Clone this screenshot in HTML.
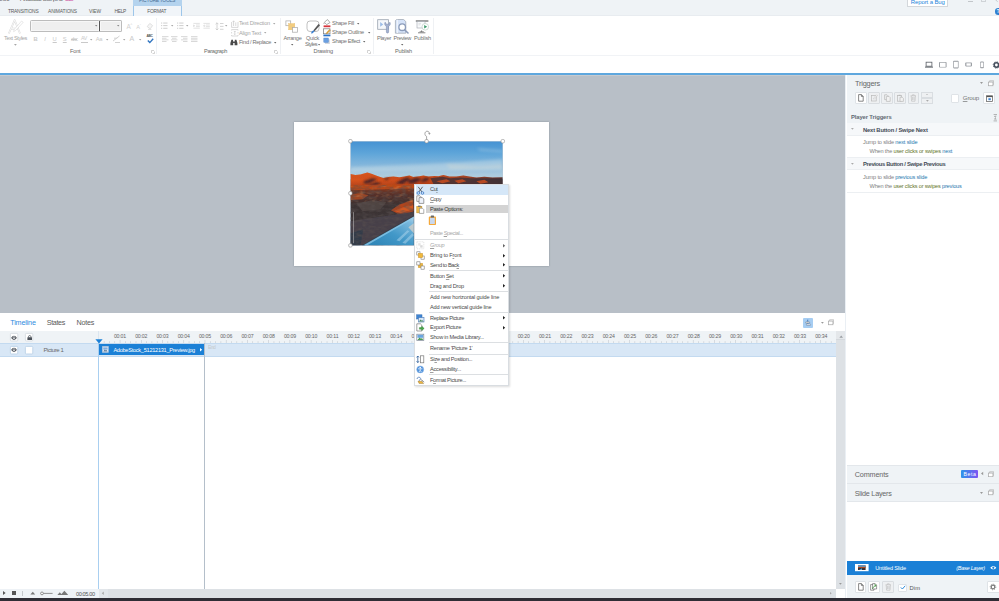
<!DOCTYPE html>
<html><head><meta charset="utf-8"><title>Storyline</title>
<style>
*{box-sizing:border-box;margin:0;padding:0}
html,body{width:999px;height:601px;overflow:hidden;background:#fff}
body{font-family:"Liberation Sans",sans-serif;font-size:5px;color:#444;position:relative}
.a{position:absolute}
.t{position:absolute;white-space:nowrap;line-height:1}
u{text-decoration-thickness:0.5px;text-underline-offset:0.7px;text-decoration-color:rgba(80,80,80,0.55)}
</style></head><body>
<div class="a" style="left:0px;top:0px;width:999px;height:16px;background:#eff3f6;"></div>
<div class="a" style="left:0px;top:15px;width:999px;height:1px;background:#e8ecf0;"></div>
<div class="a" style="left:0px;top:16px;width:999px;height:39px;background:#fff;"></div>
<div class="a" style="left:0px;top:55px;width:999px;height:1.6px;background:#f1f3f6;"></div>
<div class="a" style="left:0px;top:56px;width:999px;height:17px;background:#fff;"></div>
<div class="a" style="left:0px;top:73px;width:999px;height:2px;background:#5ea7de;"></div>
<div class="a" style="left:0px;top:75px;width:846px;height:238px;background:#b8bfc7;"></div>
<div class="a" style="left:0px;top:75px;width:845px;height:1px;background:#c6cacf;"></div>
<div class="a" style="left:0px;top:598px;width:999px;height:3px;background:#2f2d35;"></div>
<div class="a" style="left:0;top:0;width:80px;height:2.4px;overflow:hidden"><div class="t" style="left:-4.00px;top:-4px;font-size:6.6px;color:#787878;letter-spacing:-0.147px;">tled1*</div>
<div class="t" style="left:14.50px;top:-4px;font-size:6.6px;color:#787878;letter-spacing:0.000px;">-</div>
<div class="t" style="left:20.00px;top:-4px;font-size:6.6px;color:#787878;letter-spacing:-0.621px;">Articulate Storyline</div>
<div class="t" style="left:65.00px;top:-4px;font-size:6.6px;color:#d060a8;letter-spacing:-1.004px;">360</div>
</div>
<div class="a" style="left:133px;top:0;width:49px;height:6px;background:#b4d3ee;overflow:hidden"><div class="t" style="left:6.00px;top:-2px;font-size:5.0px;color:#4a7096;letter-spacing:-0.316px;">PICTURE TOOLS</div>
</div>
<div class="a" style="left:133px;top:6px;width:49px;height:10px;background:#f1f5f9;border-left:1px solid #9dc6ea;border-right:1px solid #9dc6ea;"></div>
<div class="t" style="left:8.00px;top:10px;font-size:4.9px;color:#5a5a5a;letter-spacing:-0.222px;">TRANSITIONS</div>
<div class="t" style="left:48.00px;top:10px;font-size:4.9px;color:#5a5a5a;letter-spacing:-0.113px;">ANIMATIONS</div>
<div class="t" style="left:89.00px;top:10px;font-size:4.9px;color:#5a5a5a;letter-spacing:-0.131px;">VIEW</div>
<div class="t" style="left:114.50px;top:10px;font-size:4.9px;color:#5a5a5a;letter-spacing:-0.325px;">HELP</div>
<div class="t" style="left:147.20px;top:10px;font-size:4.9px;color:#5a5a5a;letter-spacing:-0.187px;">FORMAT</div>
<div class="a" style="left:907px;top:-1px;width:41px;height:7.6px;background:#fff;border:1px solid #d3d7db;"></div>
<div class="t" style="left:910.80px;top:-1px;font-size:6.0px;color:#2484da;letter-spacing:-0.113px;">Report a Bug</div>
<div class="a" style="left:968.4px;top:1px;width:4.2px;height:1px;background:#c2c6ca;"></div>
<div class="a" style="left:981.2px;top:-1px;width:4.4px;height:3px;border:1px solid #cfd3d7;border-top:0;"></div>
<svg class="a" style="left:993px;top:0px" width="6" height="3" viewBox="0 0 6 3"><path d="M0.8 -2 L4.6 1.8" stroke="#b8bcc0" stroke-width="0.8" fill="none"/></svg>
<div class="a" style="left:995px;top:8px;width:6.6px;height:6.6px;background:#2e7fd0;border-radius:50%;"></div>
<div class="t" style="left:996.60px;top:9px;font-size:5.2px;color:#fff;letter-spacing:0.000px;font-weight:bold;">?</div>
<svg class="a" style="left:7px;top:19px" width="18" height="17" viewBox="0 0 18 17"><path d="M1.8 14.5 L7.7 1.2 L13 14.5 M4.4 9.6 L11 9.6" stroke="#d6d6d6" stroke-width="1.7" fill="none" stroke-linejoin="round"/><path d="M1.8 14.5 L7.7 1.2 L13 14.5 M4.4 9.6 L11 9.6" stroke="#fff" stroke-width="0.8" fill="none" stroke-linejoin="round"/><path d="M14.6 2 L16.2 3.3 L8.6 11.6 L6.6 12.6 L7.2 10.4 Z" stroke="#d4d4d4" stroke-width="0.55" fill="#fff"/></svg>
<div class="t" style="left:4.00px;top:36px;font-size:5.6px;color:#a6a6a6;letter-spacing:-0.371px;">Text Styles</div>
<svg class="a" style="left:13.10px;top:42.69px" width="4.80" height="3.82"><path d="M1 1 H3.80 L2.40 2.82 Z" fill="#a6a6a6"/></svg>
<div class="a" style="left:30px;top:20px;width:70px;height:12px;background:#efefef;border:1.2px solid #bcbcbc;border-radius:1.5px;box-shadow:inset 0 0 0 0.8px #fafafa;"></div>
<div class="a" style="left:99px;top:20px;width:23px;height:12px;background:#efefef;border:1.2px solid #bcbcbc;border-left:1px solid #555;border-radius:1.5px;box-shadow:inset 0 0 0 0.8px #fafafa;"></div>
<svg class="a" style="left:94.30px;top:24.42px" width="4.40" height="3.56"><path d="M1 1 H3.40 L2.20 2.56 Z" fill="#888"/></svg>
<svg class="a" style="left:116.10px;top:24.42px" width="4.40" height="3.56"><path d="M1 1 H3.40 L2.20 2.56 Z" fill="#888"/></svg>
<div class="t" style="left:126.40px;top:24px;font-size:6.4px;color:#d0d0d0;letter-spacing:0.000px;">A</div>
<div class="t" style="left:130.60px;top:24px;font-size:3.6px;color:#d0d0d0;letter-spacing:0.000px;">^</div>
<div class="t" style="left:136.20px;top:25px;font-size:5.6px;color:#d0d0d0;letter-spacing:0.000px;">A</div>
<div class="t" style="left:139.80px;top:25px;font-size:3.6px;color:#d0d0d0;letter-spacing:0.000px;">ˇ</div>
<svg class="a" style="left:146px;top:22px" width="9" height="9" viewBox="0 0 9 9"><path d="M1.2 4.6 L3.8 1.4 L6.6 3.6 L4.2 6.8 Z M2 7.4 L5.4 7.4" stroke="#d8d8d8" stroke-width="0.8" fill="#f6f6f6"/></svg>
<div class="t" style="left:33.60px;top:37px;font-size:5.8px;color:#c9c9c9;letter-spacing:0.000px;font-weight:bold;">B</div>
<div class="t" style="left:44.20px;top:37px;font-size:5.8px;color:#c9c9c9;letter-spacing:0.000px;font-style:italic;">I</div>
<div class="t" style="left:52.60px;top:37px;font-size:5.8px;color:#c9c9c9;letter-spacing:0.000px;text-decoration:underline;">U</div>
<div class="t" style="left:62.80px;top:37px;font-size:5.8px;color:#c9c9c9;letter-spacing:0.000px;text-decoration:underline;">S</div>
<div class="t" style="left:71.00px;top:37px;font-size:5.4px;color:#c9c9c9;letter-spacing:-0.902px;text-decoration:line-through;">abc</div>
<div class="t" style="left:81.00px;top:36px;font-size:5.2px;color:#c9c9c9;letter-spacing:-0.275px;">AV</div>
<div class="a" style="left:81px;top:42px;width:7px;height:0.8px;background:#c9c9c9;"></div>
<svg class="a" style="left:89.30px;top:37.82px" width="4.40" height="3.56"><path d="M1 1 H3.40 L2.20 2.56 Z" fill="#a6a6a6"/></svg>
<div class="t" style="left:95.80px;top:37px;font-size:5.8px;color:#c9c9c9;letter-spacing:-0.447px;">Aa</div>
<svg class="a" style="left:104.80px;top:37.82px" width="4.40" height="3.56"><path d="M1 1 H3.40 L2.20 2.56 Z" fill="#a6a6a6"/></svg>
<svg class="a" style="left:112px;top:35px" width="9" height="9" viewBox="0 0 9 9"><path d="M1 6 L7.5 1 M2 3.2 L5.2 3.2 M3 7.5 L8 7.5" stroke="#d2d2d2" stroke-width="1" fill="none"/></svg>
<svg class="a" style="left:122.30px;top:37.82px" width="4.40" height="3.56"><path d="M1 1 H3.40 L2.20 2.56 Z" fill="#a6a6a6"/></svg>
<div class="t" style="left:129.60px;top:35px;font-size:7px;color:#c9c9c9;letter-spacing:0.000px;">A</div>
<svg class="a" style="left:138.00px;top:37.82px" width="4.40" height="3.56"><path d="M1 1 H3.40 L2.20 2.56 Z" fill="#a6a6a6"/></svg>
<div class="t" style="left:146.60px;top:35px;font-size:3.3px;color:#555;letter-spacing:-0.383px;font-weight:bold;">ABC</div>
<svg class="a" style="left:146.5px;top:37.5px" width="7" height="6" viewBox="0 0 7 6"><path d="M0.8 2.6 L2.8 4.6 L6.2 0.8" stroke="#2f74c0" stroke-width="1.4" fill="none"/></svg>
<div class="t" style="left:70.00px;top:49px;font-size:5.6px;color:#6a6a6a;letter-spacing:-0.176px;">Font</div>
<svg class="a" style="left:151px;top:49.5px" width="4" height="4" viewBox="0 0 4 4"><path d="M0.5 3 V0.5 H3 M1.5 3.5 H3.5 V1.5" stroke="#b5b5b5" stroke-width="0.6" fill="none"/></svg>
<div class="a" style="left:156px;top:18px;width:1px;height:36px;background:#eff1f4;"></div>
<svg class="a" style="left:161px;top:21.8px" width="7.0" height="8" viewBox="0 0 7.0 8"><rect x="0" y="0.6" width="1.2" height="0.9" fill="#c9c9c9"/><rect x="2.2" y="0.6" width="4.3" height="0.9" fill="#c9c9c9"/><rect x="0" y="3.2" width="1.2" height="0.9" fill="#c9c9c9"/><rect x="2.2" y="3.2" width="4.3" height="0.9" fill="#c9c9c9"/><rect x="0" y="5.8" width="1.2" height="0.9" fill="#c9c9c9"/><rect x="2.2" y="5.8" width="4.3" height="0.9" fill="#c9c9c9"/></svg>
<svg class="a" style="left:169.80px;top:24.22px" width="4.40" height="3.56"><path d="M1 1 H3.40 L2.20 2.56 Z" fill="#a6a6a6"/></svg>
<svg class="a" style="left:176.5px;top:21.8px" width="7.0" height="8" viewBox="0 0 7.0 8"><rect x="0" y="0.6" width="1.2" height="0.9" fill="#c9c9c9"/><rect x="2.2" y="0.6" width="4.3" height="0.9" fill="#c9c9c9"/><rect x="0" y="3.2" width="1.2" height="0.9" fill="#c9c9c9"/><rect x="2.2" y="3.2" width="4.3" height="0.9" fill="#c9c9c9"/><rect x="0" y="5.8" width="1.2" height="0.9" fill="#c9c9c9"/><rect x="2.2" y="5.8" width="4.3" height="0.9" fill="#c9c9c9"/></svg>
<svg class="a" style="left:185.00px;top:24.22px" width="4.40" height="3.56"><path d="M1 1 H3.40 L2.20 2.56 Z" fill="#a6a6a6"/></svg>
<svg class="a" style="left:193px;top:22px" width="8" height="8" viewBox="0 0 8 8"><path d="M0.4 1.4 H6.8 M3 3 H6.8 M3 4.6 H6.8 M0.4 6.2 H6.8 M0.4 3 L1.8 3.8 L0.4 4.6 Z" stroke="#dadada" stroke-width="0.8" fill="none"/></svg>
<svg class="a" style="left:203px;top:22px" width="8" height="8" viewBox="0 0 8 8"><path d="M0.4 1.4 H6.8 M3 3 H6.8 M3 4.6 H6.8 M0.4 6.2 H6.8 M1.8 3 L0.4 3.8 L1.8 4.6 Z" stroke="#dadada" stroke-width="0.8" fill="none"/></svg>
<svg class="a" style="left:214.5px;top:21.5px" width="9" height="9" viewBox="0 0 9 9"><path d="M2 0.8 V8 M0.6 2.2 L2 0.8 L3.4 2.2 M0.6 6.6 L2 8 L3.4 6.6 M5 1.5 H8.5 M5 4.4 H8.5 M5 7.3 H8.5" stroke="#c9c9c9" stroke-width="0.8" fill="none"/></svg>
<svg class="a" style="left:224.00px;top:24.22px" width="4.40" height="3.56"><path d="M1 1 H3.40 L2.20 2.56 Z" fill="#a6a6a6"/></svg>
<svg class="a" style="left:161.5px;top:36.4px" width="7.0" height="8" viewBox="0 0 7.0 8"><rect x="0" y="0.19999999999999996" width="6.5" height="0.9" fill="#d4d4d4"/><rect x="0" y="1.8000000000000003" width="4.5" height="0.9" fill="#d4d4d4"/><rect x="0" y="3.4" width="6.5" height="0.9" fill="#d4d4d4"/><rect x="0" y="5.0" width="4.5" height="0.9" fill="#d4d4d4"/></svg>
<svg class="a" style="left:171px;top:36.4px" width="7.0" height="8" viewBox="0 0 7.0 8"><rect x="0" y="0.19999999999999996" width="6.5" height="0.9" fill="#d4d4d4"/><rect x="1" y="1.8000000000000003" width="4.5" height="0.9" fill="#d4d4d4"/><rect x="0" y="3.4" width="6.5" height="0.9" fill="#d4d4d4"/><rect x="1" y="5.0" width="4.5" height="0.9" fill="#d4d4d4"/></svg>
<svg class="a" style="left:180.6px;top:36.4px" width="7.0" height="8" viewBox="0 0 7.0 8"><rect x="0" y="0.19999999999999996" width="6.5" height="0.9" fill="#d4d4d4"/><rect x="2" y="1.8000000000000003" width="4.5" height="0.9" fill="#d4d4d4"/><rect x="0" y="3.4" width="6.5" height="0.9" fill="#d4d4d4"/><rect x="2" y="5.0" width="4.5" height="0.9" fill="#d4d4d4"/></svg>
<svg class="a" style="left:190.5px;top:36.4px" width="7.0" height="8" viewBox="0 0 7.0 8"><rect x="0" y="0.19999999999999996" width="6.5" height="0.9" fill="#d4d4d4"/><rect x="0" y="1.8000000000000003" width="6.5" height="0.9" fill="#d4d4d4"/><rect x="0" y="3.4" width="6.5" height="0.9" fill="#d4d4d4"/><rect x="0" y="5.0" width="6.5" height="0.9" fill="#d4d4d4"/></svg>
<svg class="a" style="left:230.5px;top:19.5px" width="8" height="8" viewBox="0 0 8 8"><path d="M0.6 2 V7.4 H7 V2 M2.6 6 V1 M4.8 6 V2.4 M1.8 1.8 L2.6 0.8 L3.4 1.8" stroke="#c9c9c9" stroke-width="0.7" fill="none"/></svg>
<div class="t" style="left:239.00px;top:21px;font-size:5.6px;color:#a6a6a6;letter-spacing:-0.209px;">Text Direction</div>
<svg class="a" style="left:271.80px;top:21.52px" width="4.40" height="3.56"><path d="M1 1 H3.40 L2.20 2.56 Z" fill="#a6a6a6"/></svg>
<svg class="a" style="left:230.5px;top:29px" width="8" height="8" viewBox="0 0 8 8"><path d="M0.6 1.5 V0.6 H7 V1.5 M0.6 6 V7 H7 V6 M0.6 3 V4.5 M7 3 V4.5 M3.8 2 V5.6 M3 2.8 L3.8 2 L4.6 2.8 M3 4.8 L3.8 5.6 L4.6 4.8" stroke="#c9c9c9" stroke-width="0.7" fill="none"/></svg>
<div class="t" style="left:239.00px;top:31px;font-size:5.6px;color:#a6a6a6;letter-spacing:-0.218px;">Align Text</div>
<svg class="a" style="left:263.20px;top:31.22px" width="4.40" height="3.56"><path d="M1 1 H3.40 L2.20 2.56 Z" fill="#a6a6a6"/></svg>
<svg class="a" style="left:230.3px;top:38.8px" width="8" height="7" viewBox="0 0 8 7"><path d="M1.4 0.8 H3 V2.4 H4.8 V0.8 H6.4 L7.4 4 V6.2 H4.6 V4 H3.2 V6.2 H0.4 V4 Z" fill="#4a4a4a"/></svg>
<div class="t" style="left:239.00px;top:40px;font-size:5.6px;color:#727272;letter-spacing:-0.293px;">Find / Replace</div>
<svg class="a" style="left:273.20px;top:41.02px" width="4.40" height="3.56"><path d="M1 1 H3.40 L2.20 2.56 Z" fill="#666"/></svg>
<div class="t" style="left:204.00px;top:49px;font-size:5.6px;color:#6a6a6a;letter-spacing:-0.350px;">Paragraph</div>
<svg class="a" style="left:274px;top:49.5px" width="4" height="4" viewBox="0 0 4 4"><path d="M0.5 3 V0.5 H3 M1.5 3.5 H3.5 V1.5" stroke="#b5b5b5" stroke-width="0.6" fill="none"/></svg>
<div class="a" style="left:279.5px;top:18px;width:1px;height:36px;background:#eff1f4;"></div>
<svg class="a" style="left:285px;top:19.5px" width="14" height="13" viewBox="0 0 14 13"><rect x="0.9" y="0.9" width="4.8" height="4.8" fill="#fff" stroke="#a8a8a8" stroke-width="0.7"/><rect x="3.6" y="3.6" width="6.2" height="6.2" fill="#f2cc80" stroke="#eabf6a" stroke-width="0.4"/><rect x="7.6" y="7.4" width="4.8" height="4.8" fill="#fff" stroke="#a8a8a8" stroke-width="0.7"/></svg>
<div class="t" style="left:283.50px;top:36px;font-size:5.6px;color:#727272;letter-spacing:-0.275px;">Arrange</div>
<svg class="a" style="left:290.30px;top:42.82px" width="4.40" height="3.56"><path d="M1 1 H3.40 L2.20 2.56 Z" fill="#666"/></svg>
<svg class="a" style="left:305.5px;top:19.5px" width="15" height="14" viewBox="0 0 15 14"><rect x="1" y="1" width="12" height="10.5" rx="3" fill="#fff" stroke="#a6a6a6" stroke-width="0.7"/><path d="M12.5 4 L14 5.2 L8.6 11.2 L7.4 10.2 Z" fill="#555"/><path d="M7.4 10.2 L8.6 11.2 L6.6 13.2 L5 13.4 L5.6 11.8 Z" fill="#3b7fd0"/></svg>
<div class="t" style="left:306.00px;top:36px;font-size:5.6px;color:#727272;letter-spacing:-0.263px;">Quick</div>
<div class="t" style="left:305.00px;top:42px;font-size:5.6px;color:#727272;letter-spacing:-0.542px;">Styles</div>
<svg class="a" style="left:317.20px;top:43.08px" width="4.20" height="3.43"><path d="M1 1 H3.20 L2.10 2.43 Z" fill="#666"/></svg>
<svg class="a" style="left:323px;top:19.3px" width="8" height="9" viewBox="0 0 8 9"><path d="M2.4 2.2 L4.6 0.6 L7 3.6 L3.6 5.6 L1.6 3.4 Z" fill="#fff" stroke="#777" stroke-width="0.6"/><path d="M1 3.6 C0.4 4.6 0.4 5 1 5 C1.6 5 1.6 4.6 1 3.6" fill="#777"/><rect x="0.6" y="6.4" width="6.8" height="1.8" fill="#d8343c"/></svg>
<div class="t" style="left:332.00px;top:21px;font-size:5.6px;color:#727272;letter-spacing:-0.290px;">Shape Fill</div>
<svg class="a" style="left:356.30px;top:21.92px" width="4.40" height="3.56"><path d="M1 1 H3.40 L2.20 2.56 Z" fill="#666"/></svg>
<svg class="a" style="left:323px;top:28.3px" width="8" height="9" viewBox="0 0 8 9"><rect x="0.6" y="0.8" width="6.4" height="5" fill="#fff" stroke="#777" stroke-width="0.7"/><path d="M6.4 1.4 L7.4 2.2 L4.4 5.4 L3.2 5.8 L3.6 4.6 Z" fill="#e8a838" stroke="#a5751e" stroke-width="0.3"/><rect x="0.4" y="6.6" width="7" height="1.7" fill="#2a72c8"/></svg>
<div class="t" style="left:332.00px;top:30px;font-size:5.6px;color:#727272;letter-spacing:-0.269px;">Shape Outline</div>
<svg class="a" style="left:366.80px;top:31.02px" width="4.40" height="3.56"><path d="M1 1 H3.40 L2.20 2.56 Z" fill="#666"/></svg>
<svg class="a" style="left:323px;top:37.3px" width="8" height="9" viewBox="0 0 8 9"><rect x="2" y="2.4" width="4.8" height="4.6" fill="#d4d8de"/><rect x="0.8" y="1" width="4.6" height="4.4" fill="#6a9fe0" stroke="#4a82cc" stroke-width="0.4"/></svg>
<div class="t" style="left:332.00px;top:39px;font-size:5.6px;color:#727272;letter-spacing:-0.330px;">Shape Effect</div>
<svg class="a" style="left:361.80px;top:40.12px" width="4.40" height="3.56"><path d="M1 1 H3.40 L2.20 2.56 Z" fill="#666"/></svg>
<div class="t" style="left:313.50px;top:49px;font-size:5.6px;color:#6a6a6a;letter-spacing:-0.149px;">Drawing</div>
<svg class="a" style="left:367px;top:49.5px" width="4" height="4" viewBox="0 0 4 4"><path d="M0.5 3 V0.5 H3 M1.5 3.5 H3.5 V1.5" stroke="#b5b5b5" stroke-width="0.6" fill="none"/></svg>
<div class="a" style="left:372.5px;top:18px;width:1px;height:36px;background:#eff1f4;"></div>
<svg class="a" style="left:377px;top:19px" width="15" height="15" viewBox="0 0 15 15"><rect x="0.7" y="0.7" width="10.8" height="9.6" fill="#f4f7fb" stroke="#9aa2ae" stroke-width="0.8"/><path d="M3.2 3 L6.2 5.4 L3.2 7.8 Z" fill="#9cbce6"/><path d="M8.2 3.2 C7.2 4.8 7.8 6.6 9.4 7.2 V13 C9.4 14.4 11.6 14.4 11.6 13 V7.2 C13.2 6.6 13.8 4.8 12.8 3.2 L11.8 5.2 H9.2 Z" fill="#a4b2d0" stroke="#7f8fb4" stroke-width="0.6"/></svg>
<div class="t" style="left:377.00px;top:36px;font-size:5.6px;color:#727272;letter-spacing:-0.312px;">Player</div>
<svg class="a" style="left:394px;top:19px" width="16" height="15" viewBox="0 0 16 15"><path d="M1.4 1.6 L2.6 0.5 H9.6 L11.8 2.6 V14.2 H1.4 Z" fill="#d6e3f8" stroke="#98a0ac" stroke-width="0.7"/><path d="M3.4 0.8 V14" stroke="#eef3fb" stroke-width="1.2"/><circle cx="8.2" cy="8.2" r="3.3" fill="#fff" stroke="#8c9cba" stroke-width="1.3"/><path d="M10.8 11 L14 14" stroke="#8c9cba" stroke-width="1.6" stroke-linecap="round"/></svg>
<div class="t" style="left:393.50px;top:36px;font-size:5.6px;color:#727272;letter-spacing:-0.345px;">Preview</div>
<svg class="a" style="left:400.30px;top:42.82px" width="4.40" height="3.56"><path d="M1 1 H3.40 L2.20 2.56 Z" fill="#666"/></svg>
<svg class="a" style="left:415px;top:19px" width="15" height="15" viewBox="0 0 15 15"><rect x="0.8" y="1.4" width="12.6" height="1.2" fill="#666"/><rect x="2" y="2.6" width="8" height="6.4" fill="#fafbfc" stroke="#a0a6ae" stroke-width="0.6"/><path d="M3.4 4.4 H6 M3.4 5.8 H5.4" stroke="#c4c8ce" stroke-width="0.5"/><circle cx="10.3" cy="7.8" r="3.3" fill="#fff" stroke="#b4c8bc" stroke-width="0.6"/><path d="M9.2 6 L12.2 7.8 L9.2 9.6 Z" fill="#3f9a6c"/><path d="M6.6 11.4 V13 M3 13.8 H10.4 M4.6 12.8 H8.8" stroke="#6a6a6a" stroke-width="0.8" fill="none"/></svg>
<div class="t" style="left:414.00px;top:36px;font-size:5.6px;color:#727272;letter-spacing:-0.195px;">Publish</div>
<div class="t" style="left:395.00px;top:49px;font-size:5.6px;color:#6a6a6a;letter-spacing:-0.195px;">Publish</div>
<div class="a" style="left:432.5px;top:18px;width:1px;height:36px;background:#eff1f4;"></div>
<svg class="a" style="left:924px;top:60px" width="10" height="9" viewBox="0 0 10 9"><rect x="2.1" y="2.2" width="5.8" height="4" fill="#fff" stroke="#5a5f66" stroke-width="0.8"/><path d="M1 7.1 H9" stroke="#5a5f66" stroke-width="1"/></svg>
<svg class="a" style="left:938px;top:60px" width="10" height="9" viewBox="0 0 10 9"><rect x="1" y="2" width="7.6" height="5.6" rx="0.8" fill="#9a9ea3"/><rect x="2" y="2.7" width="5.6" height="4.2" fill="#fff"/></svg>
<svg class="a" style="left:952px;top:60px" width="8" height="10" viewBox="0 0 8 10"><rect x="1.2" y="0.8" width="5.4" height="7.6" rx="0.8" fill="#9a9ea3"/><rect x="1.9" y="1.8" width="4" height="5.6" fill="#fff"/></svg>
<svg class="a" style="left:964px;top:61px" width="10" height="7" viewBox="0 0 10 7"><rect x="1.2" y="1.6" width="6.8" height="3.8" rx="0.8" fill="#9a9ea3"/><rect x="2.4" y="2.3" width="4.4" height="2.4" fill="#fff"/></svg>
<svg class="a" style="left:979px;top:60px" width="6" height="10" viewBox="0 0 6 10"><rect x="1.2" y="1.4" width="3.6" height="6.8" rx="0.8" fill="#9a9ea3"/><rect x="1.8" y="2.5" width="2.4" height="4.6" fill="#fff"/></svg>
<svg class="a" style="left:992px;top:60px" width="8" height="10" viewBox="0 0 8 10"><circle cx="4.4" cy="5" r="2.2" fill="none" stroke="#46505e" stroke-width="1.6"/><circle cx="4.4" cy="5" r="3.2" fill="none" stroke="#46505e" stroke-width="0.9" stroke-dasharray="1.2 1.3"/></svg>
<div class="a" style="left:294px;top:121.8px;width:255px;height:144.4px;background:#fff;box-shadow:0 0 1.6px rgba(60,70,80,0.45);"></div>
<svg class="a" style="left:350px;top:141px" width="154" height="106" viewBox="0 0 154 106">
<defs>
<linearGradient id="sky" x1="0" y1="0" x2="0" y2="1">
<stop offset="0" stop-color="#4592d3"/><stop offset="0.3" stop-color="#5ea5d9"/><stop offset="0.62" stop-color="#86b8dc"/><stop offset="0.82" stop-color="#a9cade"/><stop offset="1" stop-color="#b8d2de"/>
</linearGradient>
<linearGradient id="mtn" x1="0" y1="0" x2="1" y2="0">
<stop offset="0" stop-color="#d8541c"/><stop offset="0.5" stop-color="#c84a1a"/><stop offset="0.75" stop-color="#a04428"/><stop offset="1" stop-color="#5a3430"/>
</linearGradient>
<linearGradient id="gnd" x1="0" y1="0" x2="0" y2="1">
<stop offset="0" stop-color="#b6481c"/><stop offset="0.1" stop-color="#8e3a1c"/><stop offset="0.24" stop-color="#55302a"/><stop offset="0.4" stop-color="#3b3232"/><stop offset="1" stop-color="#3e3a40"/>
</linearGradient>
<linearGradient id="rail" x1="0" y1="1" x2="1" y2="0">
<stop offset="0" stop-color="#2a80b2"/><stop offset="0.5" stop-color="#4298c8"/><stop offset="0.85" stop-color="#7ab8dc"/><stop offset="1" stop-color="#b4d8ec"/>
</linearGradient>
<linearGradient id="mv" x1="0" y1="0" x2="0" y2="1"><stop offset="0" stop-color="#e8641e" stop-opacity="0.35"/><stop offset="0.45" stop-color="#a0361a" stop-opacity="0"/><stop offset="1" stop-color="#6a2416" stop-opacity="0.55"/></linearGradient>
<filter id="bl3" x="-20%" y="-40%" width="140%" height="180%"><feGaussianBlur stdDeviation="0.9"/></filter>
<clipPath id="pc"><rect x="0" y="0" width="152.4" height="104.2"/></clipPath>
<filter id="bl" x="-10%" y="-10%" width="120%" height="120%"><feGaussianBlur stdDeviation="0.6"/></filter>
<filter id="bl2" x="-10%" y="-30%" width="120%" height="160%"><feGaussianBlur stdDeviation="1.6"/></filter>
<filter id="nz" x="0" y="0" width="100%" height="100%"><feTurbulence type="fractalNoise" baseFrequency="0.16 0.34" numOctaves="2" seed="7"/><feColorMatrix type="matrix" values="0 0 0 0 0.1  0 0 0 0 0.08  0 0 0 0 0.08  1.4 1.4 0 0 -1.15"/><feGaussianBlur stdDeviation="0.5"/></filter>
<filter id="nz2" x="0" y="0" width="100%" height="100%"><feTurbulence type="fractalNoise" baseFrequency="0.14 0.3" numOctaves="2" seed="3"/><feColorMatrix type="matrix" values="0 0 0 0 0.8  0 0 0 0 0.34  0 0 0 0 0.12  1.5 1.5 0 0 -1.5"/><feGaussianBlur stdDeviation="0.5"/></filter>
</defs>
<g transform="translate(0.4,0.2)" clip-path="url(#pc)">
<rect x="0" y="0" width="152.4" height="40" fill="url(#sky)"/>
<g filter="url(#bl2)" opacity="0.5">
<path d="M0 26 L70 23 L110 21 L152 18 L152 29 L0 31 Z" fill="#c6dbe6"/>
<path d="M95 22 L130 25 L152 23 L152 27 L100 28 Z" fill="#e6e6dc"/>
<path d="M126 7 L152 9 L152 11 L130 9.6 Z" fill="#a8cce4"/>
</g>
<rect x="0" y="38" width="152.4" height="66.2" fill="url(#gnd)"/>
<g filter="url(#bl)">
<path d="M0 32.8 L5 33.8 L10 33.4 L17 31.4 L21 32.6 L27 34.8 L33 36.8 L38 35.8 L43 35.2 L49 36 L54 35.2 L59 34.4 L63 35.8 L69 35 L73 34.4 L78 35.4 L84 34.8 L88 35 L93 33.8 L99 35.2 L106 35.4 L113 34.4 L119 35.2 L126 36.2 L134 35.6 L142 36.4 L152.4 36 L152.4 46 L0 47 Z" fill="url(#mtn)"/>
<path d="M0 32.8 L5 33.8 L10 33.4 L17 31.4 L21 32.6 L27 34.8 L33 36.8 L38 35.8 L43 35.2 L49 36 L54 35.2 L59 34.4 L63 35.8 L69 35 L73 34.4 L78 35.4 L84 34.8 L88 35 L93 33.8 L99 35.2 L106 35.4 L113 34.4 L119 35.2 L126 36.2 L134 35.6 L142 36.4 L152.4 36 L152.4 46 L0 47 Z" fill="url(#mv)"/>
<path d="M13 40 L22 37 L27 38 L19 42 L14 42.6 Z M16 45 L26 41 L31 42 L24 45.6 Z M33 37.6 L40 36.4 L36 39 Z M45 42 L53 37.6 L57 36 L60 38 L52 43 Z M58 39.4 L66 36.2 L72 38 L64 42 L58 42.4 Z M74 36.6 L80 37 L76 40 L70 41 Z" fill="#40242c" opacity="0.9" filter="url(#bl3)"/>
<path d="M80 37 L92 35.6 L100 37 L110 36.4 L120 37 L134 37 L152.4 37.4 L152.4 44.5 L84 44.5 Z" fill="#37303a" opacity="0.75"/>
<path d="M86 40 L96 38 L100 40 L92 42 Z M104 39.6 L112 38 L116 40 L108 42 Z M126 40 L134 38.6 L138 41 L130 42.6 Z" fill="#c24d22" opacity="0.9"/>
<path d="M0 44 L30 43.4 L62 43 L70 44 L70 47 L0 49 Z" fill="#c04a1a" opacity="0.85"/>
<path d="M0 53 L10 52 L18 54 L12 58 L0 59 Z" fill="#b04a22" opacity="0.8"/>
<path d="M6 62 L22 59 L36 61 L30 68 L12 70 Z" fill="#544a48" opacity="0.75"/>
<path d="M40.6 69 L49 63.4 L62.6 58.6 L63.2 70 L56 73.4 L47 72.4 Z" fill="#b2441e"/>
<path d="M44 69.6 L56 64.8 L62.8 63.8 L62.8 68 L50 72 Z" fill="#d65c26" opacity="0.85"/>
<path d="M0 80 L40 74 L63.4 70.6 L63.4 78 L14 104.2 L0 104.2 Z" fill="#47414a"/>
<path d="M0 92 L13 88 L10 104.2 L0 104.2 Z" fill="#2c3a48" opacity="0.75"/>
</g>
<rect x="0" y="45" width="152.4" height="15" filter="url(#nz2)" opacity="0.55"/>
<rect x="0" y="44" width="152.4" height="60.2" filter="url(#nz)" opacity="0.7"/>
<path d="M12 104.2 L63.4 75.2 L63.4 104.2 Z" fill="url(#rail)"/>
<path d="M12.4 104.2 L63.4 75.4 L63.4 77 L16.4 104.2 Z" fill="#8cc8e8" opacity="0.75"/>
<path d="M11 104.2 L63.4 74.4 L63.4 75.4 L12.6 104.2 Z" fill="#2a3440" opacity="0.55"/>
<path d="M46 99 L57 89 L59 90 L49 100 Z M52 101.6 L62 92 L63.4 94 L55 102.6 Z" fill="#a8d2ea" opacity="0.55" filter="url(#bl)"/>
<path d="M58 86 L63.4 82 L63.4 92 Z" fill="#f0d8c4" opacity="0.6" filter="url(#bl)"/>
<rect x="2.7" y="71" width="0.8" height="31" fill="#d0d0d0" opacity="0.6"/>
</g>
<rect x="0.4" y="0.2" width="152.4" height="104.2" fill="none" stroke="#7f9bb5" stroke-width="0.3"/>
</svg>
<svg class="a" style="left:345px;top:125px" width="165" height="125" viewBox="0 0 165 125"><rect x="3.70" y="14.50" width="3.4" height="3.4" rx="1.2" fill="#fff" stroke="#8c8c8c" stroke-width="0.6"/><rect x="156.10" y="14.50" width="3.4" height="3.4" rx="1.2" fill="#fff" stroke="#8c8c8c" stroke-width="0.6"/><rect x="3.70" y="118.70" width="3.4" height="3.4" rx="1.2" fill="#fff" stroke="#8c8c8c" stroke-width="0.6"/><rect x="3.70" y="66.60" width="3.4" height="3.4" rx="1.2" fill="#fff" stroke="#8c8c8c" stroke-width="0.6"/><rect x="79.90" y="14.50" width="3.4" height="3.4" rx="1.2" fill="#fff" stroke="#8c8c8c" stroke-width="0.6"/><path d="M81.6 14.6 V11.4 C79.2 10.6 79.4 6.4 82 6.2 C83.8 6.2 84.4 7.4 84.4 8.8" stroke="#909090" stroke-width="0.8" fill="none"/><path d="M83.1 8.2 L84.4 9.8 L85.7 8.2 Z" fill="#909090"/></svg>
<div class="a" style="left:845px;top:75px;width:154px;height:523px;background:#fff;"></div>
<div class="a" style="left:845px;top:75px;width:1.4px;height:523px;background:#eaeff4;"></div>
<div class="a" style="left:847px;top:75px;width:152px;height:48px;background:#f7f9fb;"></div>
<div class="a" style="left:847px;top:75px;width:152px;height:34.7px;background:#eff3f6;"></div>
<div class="t" style="left:855.00px;top:80px;font-size:7.4px;color:#666;letter-spacing:-0.233px;">Triggers</div>
<svg class="a" style="left:979.30px;top:81.43px" width="5.00" height="3.95"><path d="M1 1 H4.00 L2.50 2.95 Z" fill="#999"/></svg>
<svg class="a" style="left:987.9px;top:80.3px" width="6.4" height="6.4" viewBox="0 0 8 8"><rect x="0.8" y="2.6" width="5.4" height="4.6" fill="#fff" stroke="#a8a8a8" stroke-width="0.9"/><path d="M2 2.4 V1 H7.2 V5.4 H6.2" stroke="#b0b0b0" stroke-width="0.9" fill="none"/></svg>
<div class="a" style="left:855.4px;top:92.3px;width:11.6px;height:11.8px;background:#fff;border:1px solid #dfe3e7;border-radius:1px;"></div>
<svg class="a" style="left:858.3px;top:94.2px" width="6" height="8" viewBox="0 0 6 8"><path d="M0.6 0.6 H3.4 L5.2 2.4 V7.2 H0.6 Z M3.4 0.6 V2.4 H5.2" fill="#fff" stroke="#555" stroke-width="0.7"/></svg>
<div class="a" style="left:868.4px;top:92.3px;width:11.8px;height:11.8px;background:#eef0f2;border:1px solid #d9dde1;border-radius:1px;"></div>
<div class="a" style="left:881.4px;top:92.3px;width:11.8px;height:11.8px;background:#eef0f2;border:1px solid #d9dde1;border-radius:1px;"></div>
<div class="a" style="left:894.4px;top:92.3px;width:11.8px;height:11.8px;background:#eef0f2;border:1px solid #d9dde1;border-radius:1px;"></div>
<div class="a" style="left:907.6px;top:92.3px;width:11.8px;height:11.8px;background:#eef0f2;border:1px solid #d9dde1;border-radius:1px;"></div>
<svg class="a" style="left:871.2px;top:94.4px" width="7" height="8" viewBox="0 0 7 8"><rect x="0.6" y="1.4" width="4.6" height="5.6" fill="none" stroke="#b9b9b9" stroke-width="0.7"/><path d="M2.4 4.6 L5.6 0.8 L6.4 1.6 L3.2 5.2 Z" fill="#fff" stroke="#b9b9b9" stroke-width="0.5"/></svg>
<svg class="a" style="left:884.2px;top:94.4px" width="7" height="8" viewBox="0 0 7 8"><path d="M0.6 0.8 H3 L4 1.8 V5.6 H0.6 Z" fill="none" stroke="#b9b9b9" stroke-width="0.7"/><path d="M2.4 2.4 H5 L6.2 3.6 V7.4 H2.4 Z" fill="#f2f2f2" stroke="#b9b9b9" stroke-width="0.7"/></svg>
<svg class="a" style="left:897.2px;top:94.4px" width="7" height="8" viewBox="0 0 7 8"><rect x="0.6" y="1.6" width="4" height="5.6" fill="none" stroke="#b9b9b9" stroke-width="0.7"/><rect x="1.6" y="0.8" width="2" height="1.2" fill="#b9b9b9"/><path d="M3 3.2 H5.2 L6.4 4.4 V7.4 H3 Z" fill="#f2f2f2" stroke="#b9b9b9" stroke-width="0.7"/></svg>
<svg class="a" style="left:910.4px;top:94.4px" width="7" height="8" viewBox="0 0 7 8"><path d="M0.6 1.8 H6 M2.4 1.8 V0.8 H4.2 V1.8 M1.2 1.8 L1.6 7.2 H5 L5.4 1.8 M2.6 3 V6 M4 3 V6" fill="none" stroke="#b9b9b9" stroke-width="0.6"/></svg>
<div class="a" style="left:921.4px;top:92.3px;width:12px;height:6px;background:#eef0f2;border:1px solid #d9dde1;"></div>
<div class="a" style="left:921.4px;top:98.2px;width:12px;height:6px;background:#eef0f2;border:1px solid #d9dde1;"></div>
<div class="a" style="left:926px;top:94.4px;width:0;height:0;border-left:1.4px solid transparent;border-right:1.4px solid transparent;border-bottom:1.8px solid #aaa"></div>
<svg class="a" style="left:925.00px;top:99.49px" width="4.80" height="3.82"><path d="M1 1 H3.80 L2.40 2.82 Z" fill="#aaa"/></svg>
<div class="a" style="left:951.2px;top:94.4px;width:8px;height:8.2px;background:#fff;border:1px solid #dfe3e7;border-radius:1px;"></div>
<div class="t" style="left:962.80px;top:95px;font-size:6.2px;color:#777;letter-spacing:-0.206px;"><u>G</u>roup</div>
<div class="a" style="left:983.2px;top:92.3px;width:12px;height:11.8px;background:#fff;border:1px solid #dfe3e7;border-radius:1px;"></div>
<svg class="a" style="left:985.6px;top:94.6px" width="8" height="8" viewBox="0 0 8 8"><rect x="0.6" y="0.8" width="6" height="5.6" fill="#fff" stroke="#555" stroke-width="0.7"/><rect x="0.6" y="0.8" width="6" height="1.3" fill="#555"/><rect x="2.4" y="3.2" width="2.4" height="2" fill="#3f86d4"/></svg>
<div class="a" style="left:847px;top:110.3px;width:152px;height:12.5px;background:#eff3f6;"></div>
<div class="t" style="left:851.00px;top:115px;font-size:5.9px;color:#626a74;letter-spacing:-0.136px;font-weight:bold;">Player Triggers</div>
<svg class="a" style="left:993px;top:113.6px" width="5" height="8" viewBox="0 0 5 8"><path d="M0.6 0.5 H4 M0.6 6.9 H4 M2.3 1.6 V3 M2.3 4.4 V5.8 M1.2 2.2 L2.3 3.2 L3.4 2.2 M1.2 5.2 L2.3 4.2 L3.4 5.2" stroke="#888" stroke-width="0.6" fill="none"/></svg>
<div class="a" style="left:847px;top:123.2px;width:152px;height:12.2px;background:#f6f8fa;"></div>
<div class="a" style="left:847px;top:135.4px;width:152px;height:0.8px;background:#eceff2;"></div>
<svg class="a" style="left:850.20px;top:127.39px" width="4.80" height="3.82"><path d="M1 1 H3.80 L2.40 2.82 Z" fill="#aaa"/></svg>
<div class="t" style="left:863.00px;top:128px;font-size:5.8px;color:#444c56;letter-spacing:-0.164px;font-weight:bold;">Next Button / Swipe Next</div>
<div class="t" style="left:863.00px;top:140px;font-size:5.6px;color:#808080;letter-spacing:-0.159px;">Jump to slide <span style="color:#2878b0">next slide</span></div>
<div class="t" style="left:869.60px;top:149px;font-size:5.6px;color:#808080;letter-spacing:-0.183px;">When the <span style="color:#66762e">user clicks or swipes</span> <span style="color:#2878b0">next</span></div>
<div class="a" style="left:847px;top:156.8px;width:152px;height:0.8px;background:#eceff2;"></div>
<div class="a" style="left:847px;top:157.6px;width:152px;height:11.8px;background:#f6f8fa;"></div>
<div class="a" style="left:847px;top:169.4px;width:152px;height:0.8px;background:#eceff2;"></div>
<svg class="a" style="left:850.20px;top:161.69px" width="4.80" height="3.82"><path d="M1 1 H3.80 L2.40 2.82 Z" fill="#aaa"/></svg>
<div class="t" style="left:863.00px;top:162px;font-size:5.8px;color:#444c56;letter-spacing:-0.316px;font-weight:bold;">Previous Button / Swipe Previous</div>
<div class="t" style="left:863.00px;top:175px;font-size:5.6px;color:#808080;letter-spacing:-0.164px;">Jump to slide <span style="color:#2878b0">previous slide</span></div>
<div class="t" style="left:869.60px;top:184px;font-size:5.6px;color:#808080;letter-spacing:-0.192px;">When the <span style="color:#66762e">user clicks or swipes</span> <span style="color:#2878b0">previous</span></div>
<div class="a" style="left:847px;top:191.6px;width:152px;height:0.8px;background:#eceff2;"></div>
<div class="a" style="left:847px;top:465px;width:152px;height:37px;background:#e3e7eb;"></div>
<div class="a" style="left:847px;top:465.6px;width:152px;height:17.4px;background:#eff3f6;"></div>
<div class="t" style="left:854.80px;top:471px;font-size:7.2px;color:#666;letter-spacing:-0.126px;">Comments</div>
<div class="a" style="left:961.4px;top:470px;width:17px;height:8px;background:linear-gradient(90deg,#2f95ea,#7d55f2);border-radius:1px;"></div>
<div class="t" style="left:963.40px;top:472px;font-size:5.2px;color:#fff;letter-spacing:0.576px;">Beta</div>
<svg class="a" style="left:979.6px;top:471.4px" width="5" height="5"><path d="M3.2 0.8 V4.2 L1 2.5 Z" fill="#999"/></svg>
<svg class="a" style="left:987.9px;top:470.8px" width="6.4" height="6.4" viewBox="0 0 8 8"><rect x="0.8" y="2.6" width="5.4" height="4.6" fill="#fff" stroke="#a8a8a8" stroke-width="0.9"/><path d="M2 2.4 V1 H7.2 V5.4 H6.2" stroke="#b0b0b0" stroke-width="0.9" fill="none"/></svg>
<div class="a" style="left:847px;top:483.8px;width:152px;height:17.6px;background:#eff3f6;"></div>
<div class="t" style="left:854.80px;top:490px;font-size:7.2px;color:#666;letter-spacing:-0.235px;">Slide Layers</div>
<svg class="a" style="left:979.30px;top:490.82px" width="5.00" height="3.95"><path d="M1 1 H4.00 L2.50 2.95 Z" fill="#999"/></svg>
<svg class="a" style="left:987.9px;top:489.4px" width="6.4" height="6.4" viewBox="0 0 8 8"><rect x="0.8" y="2.6" width="5.4" height="4.6" fill="#fff" stroke="#a8a8a8" stroke-width="0.9"/><path d="M2 2.4 V1 H7.2 V5.4 H6.2" stroke="#b0b0b0" stroke-width="0.9" fill="none"/></svg>
<div class="a" style="left:847.3px;top:561.2px;width:151.7px;height:13.6px;background:#1b80d6;"></div>
<svg class="a" style="left:855px;top:564px" width="14" height="8" viewBox="0 0 14 8"><rect x="0" y="0" width="13.6" height="7.2" fill="#fff"/><rect x="3" y="1.4" width="7.6" height="4.6" fill="#3a3034"/><rect x="3" y="1.4" width="7.6" height="1.6" fill="#5c9ed6"/><rect x="3" y="2.8" width="7.6" height="1" fill="#c8541e"/><path d="M4 6 L7 4.2 V6 Z" fill="#58a8dc"/></svg>
<div class="t" style="left:875.20px;top:566px;font-size:5.6px;color:#fff;letter-spacing:-0.157px;">Untitled Slide</div>
<div class="t" style="left:956.20px;top:566px;font-size:5.6px;color:#fff;letter-spacing:-0.272px;font-style:italic;">(Base Layer)</div>
<svg class="a" style="left:989.6px;top:565.4px" width="7" height="6" viewBox="0 0 7 6"><path d="M0.4 2.8 C1.6 0.8 5 0.8 6.2 2.8 C5 4.8 1.6 4.8 0.4 2.8 Z" fill="#fff"/><circle cx="3.3" cy="2.8" r="1.1" fill="#1b80d6"/></svg>
<div class="a" style="left:847px;top:574.8px;width:152px;height:23.2px;background:#eff3f6;"></div>
<div class="a" style="left:855.4px;top:581.2px;width:11px;height:11.8px;background:#fff;border:1px solid #dfe3e7;border-radius:1px;"></div>
<div class="a" style="left:868px;top:581.2px;width:11.6px;height:11.8px;background:#fff;border:1px solid #dfe3e7;border-radius:1px;"></div>
<div class="a" style="left:882px;top:581.2px;width:11.6px;height:11.8px;background:#eef0f2;border:1px solid #d9dde1;border-radius:1px;"></div>
<svg class="a" style="left:858px;top:583.2px" width="6" height="8" viewBox="0 0 6 8"><path d="M0.6 0.6 H3.4 L5.2 2.4 V7.2 H0.6 Z M3.4 0.6 V2.4 H5.2" fill="#fff" stroke="#555" stroke-width="0.7"/></svg>
<svg class="a" style="left:870.4px;top:583.2px" width="8" height="8" viewBox="0 0 8 8"><path d="M0.6 1.6 H3 L4 2.6 V7.2 H0.6 Z" fill="#fff" stroke="#555" stroke-width="0.6"/><path d="M2.6 0.6 H5.2 L6.6 2 V6 H2.6 Z" fill="#fff" stroke="#555" stroke-width="0.6"/><path d="M2 5.6 L5.8 2 L4.4 1.8 M5.8 2 L5.6 3.6" stroke="#4a9a4a" stroke-width="0.9" fill="none"/></svg>
<svg class="a" style="left:884.6px;top:583.2px" width="7" height="8" viewBox="0 0 7 8"><path d="M0.6 1.8 H6 M2.4 1.8 V0.8 H4.2 V1.8 M1.2 1.8 L1.6 7.2 H5 L5.4 1.8 M2.6 3 V6 M4 3 V6" fill="none" stroke="#b9b9b9" stroke-width="0.6"/></svg>
<div class="a" style="left:898.2px;top:583.6px;width:8.4px;height:8.4px;background:#fff;border:1px solid #dfe3e7;border-radius:1px;"></div>
<svg class="a" style="left:899.6px;top:585.2px" width="6" height="5" viewBox="0 0 6 5"><path d="M0.8 2.4 L2.4 4 L5.2 0.8" stroke="#1b80d6" stroke-width="0.9" fill="none"/></svg>
<div class="t" style="left:909.60px;top:586px;font-size:5.8px;color:#555;letter-spacing:0.030px;">Dim</div>
<div class="a" style="left:986.8px;top:581.2px;width:13px;height:11.8px;background:#fff;border:1px solid #dfe3e7;border-radius:1px;"></div>
<svg class="a" style="left:989px;top:583.2px" width="8" height="8" viewBox="0 0 8 8"><circle cx="4" cy="4" r="1.8" fill="none" stroke="#7a7a7a" stroke-width="1.2"/><circle cx="4" cy="4" r="2.8" fill="none" stroke="#7a7a7a" stroke-width="0.8" stroke-dasharray="1.1 1.1"/></svg>
<div class="a" style="left:0px;top:313px;width:845px;height:284px;background:#fff;"></div>
<div class="t" style="left:10.20px;top:319px;font-size:7.2px;color:#2e8ae0;letter-spacing:-0.168px;">Timeline</div>
<div class="t" style="left:46.80px;top:319px;font-size:7.2px;color:#5a5a5a;letter-spacing:-0.369px;">States</div>
<div class="t" style="left:76.60px;top:319px;font-size:7.2px;color:#5a5a5a;letter-spacing:-0.242px;">Notes</div>
<div class="a" style="left:803px;top:317.6px;width:10px;height:10px;background:#a6cdf2;border-radius:1px;"></div>
<svg class="a" style="left:804.4px;top:318.6px" width="8" height="8" viewBox="0 0 8 8"><path d="M3.7 1 V5.6" stroke="#4a6a94" stroke-width="0.6"/><path d="M3 0.8 H4.4 L3.7 1.8 Z" fill="#2f6fc0"/><rect x="1.6" y="2.8" width="4" height="1.5" rx="0.5" fill="#e8e0d4" stroke="#5a7aa0" stroke-width="0.5"/><rect x="2.4" y="5" width="4.2" height="1.5" rx="0.5" fill="#f4f4f4" stroke="#5a7aa0" stroke-width="0.5"/></svg>
<svg class="a" style="left:820.00px;top:320.69px" width="4.80" height="3.82"><path d="M1 1 H3.80 L2.40 2.82 Z" fill="#999"/></svg>
<svg class="a" style="left:828.0px;top:319.4px" width="6.4" height="6.4" viewBox="0 0 8 8"><rect x="0.8" y="2.6" width="5.4" height="4.6" fill="#fff" stroke="#a8a8a8" stroke-width="0.9"/><path d="M2 2.4 V1 H7.2 V5.4 H6.2" stroke="#b0b0b0" stroke-width="0.9" fill="none"/></svg>
<div class="a" style="left:0px;top:331px;width:836px;height:12.2px;background:#eff3f6;"></div>
<div class="a" style="left:0px;top:343.2px;width:836px;height:13.6px;background:#d8e7f6;border-top:1px solid #c3daf0;border-bottom:1px solid #c3daf0;"></div>
<svg class="a" style="left:9.2px;top:332.3px" width="10.4" height="10.6" viewBox="0 0 10.4 10.6"><rect x="1.4" y="1.4" width="7.4" height="7.6" rx="0.9" fill="#fff" stroke="#d6dbe1" stroke-width="0.9"/></svg>
<svg class="a" style="left:11.4px;top:335px" width="6" height="5.4" viewBox="0 0 6 5.4"><path d="M0.2 2.7 C1.6 0 4.4 0 5.8 2.7 C4.4 5.4 1.6 5.4 0.2 2.7 Z" fill="#4a5058"/><circle cx="3" cy="2.7" r="1.3" fill="#fff"/><circle cx="3" cy="2.7" r="0.75" fill="#4a5058"/></svg>
<svg class="a" style="left:24.4px;top:332.3px" width="10.4" height="10.6" viewBox="0 0 10.4 10.6"><rect x="1.4" y="1.4" width="7.4" height="7.6" rx="0.9" fill="#fff" stroke="#d6dbe1" stroke-width="0.9"/></svg>
<svg class="a" style="left:27px;top:334.8px" width="5.6" height="5.4" viewBox="0 0 5.6 5.4"><rect x="0.4" y="2.2" width="4.6" height="2.9" rx="0.3" fill="#4a5058"/><path d="M1.5 2.4 V1.5 C1.5 0.3 3.9 0.3 3.9 1.5 V2.4" stroke="#4a5058" stroke-width="0.8" fill="none"/></svg>
<svg class="a" style="left:9.2px;top:344.6px" width="10.4" height="10.6" viewBox="0 0 10.4 10.6"><rect x="1.4" y="1.4" width="7.4" height="7.6" rx="0.9" fill="#fff" stroke="#bcd2e8" stroke-width="0.9"/></svg>
<svg class="a" style="left:11.4px;top:347.2px" width="6" height="5.4" viewBox="0 0 6 5.4"><path d="M0.2 2.7 C1.6 0 4.4 0 5.8 2.7 C4.4 5.4 1.6 5.4 0.2 2.7 Z" fill="#4a5058"/><circle cx="3" cy="2.7" r="1.3" fill="#fff"/><circle cx="3" cy="2.7" r="0.75" fill="#4a5058"/></svg>
<svg class="a" style="left:24.4px;top:344.6px" width="10.4" height="10.6" viewBox="0 0 10.4 10.6"><rect x="1.4" y="1.4" width="7.4" height="7.6" rx="0.9" fill="#fff" stroke="#bcd2e8" stroke-width="0.9"/></svg>
<div class="t" style="left:43.40px;top:347px;font-size:6.0px;color:#6a6a6a;letter-spacing:-0.409px;">Picture 1</div>
<svg class="a" style="left:0px;top:331px" width="836" height="12.2" viewBox="0 0 836 12.2"><rect x="98.20" y="9.0" width="0.6" height="3.0" fill="#c3c9d0"/><rect x="103.51" y="10.2" width="0.6" height="1.8" fill="#c3c9d0"/><rect x="108.83" y="10.2" width="0.6" height="1.8" fill="#c3c9d0"/><rect x="114.14" y="10.2" width="0.6" height="1.8" fill="#c3c9d0"/><rect x="119.45" y="9.0" width="0.6" height="3.0" fill="#c3c9d0"/><rect x="124.76" y="10.2" width="0.6" height="1.8" fill="#c3c9d0"/><rect x="130.07" y="10.2" width="0.6" height="1.8" fill="#c3c9d0"/><rect x="135.39" y="10.2" width="0.6" height="1.8" fill="#c3c9d0"/><rect x="140.70" y="9.0" width="0.6" height="3.0" fill="#c3c9d0"/><rect x="146.01" y="10.2" width="0.6" height="1.8" fill="#c3c9d0"/><rect x="151.32" y="10.2" width="0.6" height="1.8" fill="#c3c9d0"/><rect x="156.64" y="10.2" width="0.6" height="1.8" fill="#c3c9d0"/><rect x="161.95" y="9.0" width="0.6" height="3.0" fill="#c3c9d0"/><rect x="167.26" y="10.2" width="0.6" height="1.8" fill="#c3c9d0"/><rect x="172.57" y="10.2" width="0.6" height="1.8" fill="#c3c9d0"/><rect x="177.89" y="10.2" width="0.6" height="1.8" fill="#c3c9d0"/><rect x="183.20" y="9.0" width="0.6" height="3.0" fill="#c3c9d0"/><rect x="188.51" y="10.2" width="0.6" height="1.8" fill="#c3c9d0"/><rect x="193.82" y="10.2" width="0.6" height="1.8" fill="#c3c9d0"/><rect x="199.14" y="10.2" width="0.6" height="1.8" fill="#c3c9d0"/><rect x="204.45" y="9.0" width="0.6" height="3.0" fill="#c3c9d0"/><rect x="209.76" y="10.2" width="0.6" height="1.8" fill="#c3c9d0"/><rect x="215.07" y="10.2" width="0.6" height="1.8" fill="#c3c9d0"/><rect x="220.39" y="10.2" width="0.6" height="1.8" fill="#c3c9d0"/><rect x="225.70" y="9.0" width="0.6" height="3.0" fill="#c3c9d0"/><rect x="231.01" y="10.2" width="0.6" height="1.8" fill="#c3c9d0"/><rect x="236.32" y="10.2" width="0.6" height="1.8" fill="#c3c9d0"/><rect x="241.64" y="10.2" width="0.6" height="1.8" fill="#c3c9d0"/><rect x="246.95" y="9.0" width="0.6" height="3.0" fill="#c3c9d0"/><rect x="252.26" y="10.2" width="0.6" height="1.8" fill="#c3c9d0"/><rect x="257.57" y="10.2" width="0.6" height="1.8" fill="#c3c9d0"/><rect x="262.89" y="10.2" width="0.6" height="1.8" fill="#c3c9d0"/><rect x="268.20" y="9.0" width="0.6" height="3.0" fill="#c3c9d0"/><rect x="273.51" y="10.2" width="0.6" height="1.8" fill="#c3c9d0"/><rect x="278.82" y="10.2" width="0.6" height="1.8" fill="#c3c9d0"/><rect x="284.14" y="10.2" width="0.6" height="1.8" fill="#c3c9d0"/><rect x="289.45" y="9.0" width="0.6" height="3.0" fill="#c3c9d0"/><rect x="294.76" y="10.2" width="0.6" height="1.8" fill="#c3c9d0"/><rect x="300.07" y="10.2" width="0.6" height="1.8" fill="#c3c9d0"/><rect x="305.39" y="10.2" width="0.6" height="1.8" fill="#c3c9d0"/><rect x="310.70" y="9.0" width="0.6" height="3.0" fill="#c3c9d0"/><rect x="316.01" y="10.2" width="0.6" height="1.8" fill="#c3c9d0"/><rect x="321.32" y="10.2" width="0.6" height="1.8" fill="#c3c9d0"/><rect x="326.64" y="10.2" width="0.6" height="1.8" fill="#c3c9d0"/><rect x="331.95" y="9.0" width="0.6" height="3.0" fill="#c3c9d0"/><rect x="337.26" y="10.2" width="0.6" height="1.8" fill="#c3c9d0"/><rect x="342.57" y="10.2" width="0.6" height="1.8" fill="#c3c9d0"/><rect x="347.89" y="10.2" width="0.6" height="1.8" fill="#c3c9d0"/><rect x="353.20" y="9.0" width="0.6" height="3.0" fill="#c3c9d0"/><rect x="358.51" y="10.2" width="0.6" height="1.8" fill="#c3c9d0"/><rect x="363.82" y="10.2" width="0.6" height="1.8" fill="#c3c9d0"/><rect x="369.14" y="10.2" width="0.6" height="1.8" fill="#c3c9d0"/><rect x="374.45" y="9.0" width="0.6" height="3.0" fill="#c3c9d0"/><rect x="379.76" y="10.2" width="0.6" height="1.8" fill="#c3c9d0"/><rect x="385.07" y="10.2" width="0.6" height="1.8" fill="#c3c9d0"/><rect x="390.39" y="10.2" width="0.6" height="1.8" fill="#c3c9d0"/><rect x="395.70" y="9.0" width="0.6" height="3.0" fill="#c3c9d0"/><rect x="401.01" y="10.2" width="0.6" height="1.8" fill="#c3c9d0"/><rect x="406.32" y="10.2" width="0.6" height="1.8" fill="#c3c9d0"/><rect x="411.64" y="10.2" width="0.6" height="1.8" fill="#c3c9d0"/><rect x="416.95" y="9.0" width="0.6" height="3.0" fill="#c3c9d0"/><rect x="422.26" y="10.2" width="0.6" height="1.8" fill="#c3c9d0"/><rect x="427.57" y="10.2" width="0.6" height="1.8" fill="#c3c9d0"/><rect x="432.89" y="10.2" width="0.6" height="1.8" fill="#c3c9d0"/><rect x="438.20" y="9.0" width="0.6" height="3.0" fill="#c3c9d0"/><rect x="443.51" y="10.2" width="0.6" height="1.8" fill="#c3c9d0"/><rect x="448.82" y="10.2" width="0.6" height="1.8" fill="#c3c9d0"/><rect x="454.14" y="10.2" width="0.6" height="1.8" fill="#c3c9d0"/><rect x="459.45" y="9.0" width="0.6" height="3.0" fill="#c3c9d0"/><rect x="464.76" y="10.2" width="0.6" height="1.8" fill="#c3c9d0"/><rect x="470.07" y="10.2" width="0.6" height="1.8" fill="#c3c9d0"/><rect x="475.39" y="10.2" width="0.6" height="1.8" fill="#c3c9d0"/><rect x="480.70" y="9.0" width="0.6" height="3.0" fill="#c3c9d0"/><rect x="486.01" y="10.2" width="0.6" height="1.8" fill="#c3c9d0"/><rect x="491.32" y="10.2" width="0.6" height="1.8" fill="#c3c9d0"/><rect x="496.64" y="10.2" width="0.6" height="1.8" fill="#c3c9d0"/><rect x="501.95" y="9.0" width="0.6" height="3.0" fill="#c3c9d0"/><rect x="507.26" y="10.2" width="0.6" height="1.8" fill="#c3c9d0"/><rect x="512.58" y="10.2" width="0.6" height="1.8" fill="#c3c9d0"/><rect x="517.89" y="10.2" width="0.6" height="1.8" fill="#c3c9d0"/><rect x="523.20" y="9.0" width="0.6" height="3.0" fill="#c3c9d0"/><rect x="528.51" y="10.2" width="0.6" height="1.8" fill="#c3c9d0"/><rect x="533.83" y="10.2" width="0.6" height="1.8" fill="#c3c9d0"/><rect x="539.14" y="10.2" width="0.6" height="1.8" fill="#c3c9d0"/><rect x="544.45" y="9.0" width="0.6" height="3.0" fill="#c3c9d0"/><rect x="549.76" y="10.2" width="0.6" height="1.8" fill="#c3c9d0"/><rect x="555.08" y="10.2" width="0.6" height="1.8" fill="#c3c9d0"/><rect x="560.39" y="10.2" width="0.6" height="1.8" fill="#c3c9d0"/><rect x="565.70" y="9.0" width="0.6" height="3.0" fill="#c3c9d0"/><rect x="571.01" y="10.2" width="0.6" height="1.8" fill="#c3c9d0"/><rect x="576.33" y="10.2" width="0.6" height="1.8" fill="#c3c9d0"/><rect x="581.64" y="10.2" width="0.6" height="1.8" fill="#c3c9d0"/><rect x="586.95" y="9.0" width="0.6" height="3.0" fill="#c3c9d0"/><rect x="592.26" y="10.2" width="0.6" height="1.8" fill="#c3c9d0"/><rect x="597.58" y="10.2" width="0.6" height="1.8" fill="#c3c9d0"/><rect x="602.89" y="10.2" width="0.6" height="1.8" fill="#c3c9d0"/><rect x="608.20" y="9.0" width="0.6" height="3.0" fill="#c3c9d0"/><rect x="613.51" y="10.2" width="0.6" height="1.8" fill="#c3c9d0"/><rect x="618.83" y="10.2" width="0.6" height="1.8" fill="#c3c9d0"/><rect x="624.14" y="10.2" width="0.6" height="1.8" fill="#c3c9d0"/><rect x="629.45" y="9.0" width="0.6" height="3.0" fill="#c3c9d0"/><rect x="634.76" y="10.2" width="0.6" height="1.8" fill="#c3c9d0"/><rect x="640.08" y="10.2" width="0.6" height="1.8" fill="#c3c9d0"/><rect x="645.39" y="10.2" width="0.6" height="1.8" fill="#c3c9d0"/><rect x="650.70" y="9.0" width="0.6" height="3.0" fill="#c3c9d0"/><rect x="656.01" y="10.2" width="0.6" height="1.8" fill="#c3c9d0"/><rect x="661.33" y="10.2" width="0.6" height="1.8" fill="#c3c9d0"/><rect x="666.64" y="10.2" width="0.6" height="1.8" fill="#c3c9d0"/><rect x="671.95" y="9.0" width="0.6" height="3.0" fill="#c3c9d0"/><rect x="677.26" y="10.2" width="0.6" height="1.8" fill="#c3c9d0"/><rect x="682.58" y="10.2" width="0.6" height="1.8" fill="#c3c9d0"/><rect x="687.89" y="10.2" width="0.6" height="1.8" fill="#c3c9d0"/><rect x="693.20" y="9.0" width="0.6" height="3.0" fill="#c3c9d0"/><rect x="698.51" y="10.2" width="0.6" height="1.8" fill="#c3c9d0"/><rect x="703.83" y="10.2" width="0.6" height="1.8" fill="#c3c9d0"/><rect x="709.14" y="10.2" width="0.6" height="1.8" fill="#c3c9d0"/><rect x="714.45" y="9.0" width="0.6" height="3.0" fill="#c3c9d0"/><rect x="719.76" y="10.2" width="0.6" height="1.8" fill="#c3c9d0"/><rect x="725.08" y="10.2" width="0.6" height="1.8" fill="#c3c9d0"/><rect x="730.39" y="10.2" width="0.6" height="1.8" fill="#c3c9d0"/><rect x="735.70" y="9.0" width="0.6" height="3.0" fill="#c3c9d0"/><rect x="741.01" y="10.2" width="0.6" height="1.8" fill="#c3c9d0"/><rect x="746.33" y="10.2" width="0.6" height="1.8" fill="#c3c9d0"/><rect x="751.64" y="10.2" width="0.6" height="1.8" fill="#c3c9d0"/><rect x="756.95" y="9.0" width="0.6" height="3.0" fill="#c3c9d0"/><rect x="762.26" y="10.2" width="0.6" height="1.8" fill="#c3c9d0"/><rect x="767.58" y="10.2" width="0.6" height="1.8" fill="#c3c9d0"/><rect x="772.89" y="10.2" width="0.6" height="1.8" fill="#c3c9d0"/><rect x="778.20" y="9.0" width="0.6" height="3.0" fill="#c3c9d0"/><rect x="783.51" y="10.2" width="0.6" height="1.8" fill="#c3c9d0"/><rect x="788.83" y="10.2" width="0.6" height="1.8" fill="#c3c9d0"/><rect x="794.14" y="10.2" width="0.6" height="1.8" fill="#c3c9d0"/><rect x="799.45" y="9.0" width="0.6" height="3.0" fill="#c3c9d0"/><rect x="804.76" y="10.2" width="0.6" height="1.8" fill="#c3c9d0"/><rect x="810.08" y="10.2" width="0.6" height="1.8" fill="#c3c9d0"/><rect x="815.39" y="10.2" width="0.6" height="1.8" fill="#c3c9d0"/><rect x="820.70" y="9.0" width="0.6" height="3.0" fill="#c3c9d0"/><rect x="826.01" y="10.2" width="0.6" height="1.8" fill="#c3c9d0"/><rect x="831.33" y="10.2" width="0.6" height="1.8" fill="#c3c9d0"/></svg>
<div class="t" style="left:113.95px;top:334px;font-size:5.2px;color:#666;letter-spacing:-0.203px;">00:01</div>
<div class="t" style="left:135.20px;top:334px;font-size:5.2px;color:#666;letter-spacing:-0.203px;">00:02</div>
<div class="t" style="left:156.45px;top:334px;font-size:5.2px;color:#666;letter-spacing:-0.203px;">00:03</div>
<div class="t" style="left:177.70px;top:334px;font-size:5.2px;color:#666;letter-spacing:-0.203px;">00:04</div>
<div class="t" style="left:198.95px;top:334px;font-size:5.2px;color:#666;letter-spacing:-0.203px;">00:05</div>
<div class="t" style="left:220.20px;top:334px;font-size:5.2px;color:#666;letter-spacing:-0.203px;">00:06</div>
<div class="t" style="left:241.45px;top:334px;font-size:5.2px;color:#666;letter-spacing:-0.203px;">00:07</div>
<div class="t" style="left:262.70px;top:334px;font-size:5.2px;color:#666;letter-spacing:-0.203px;">00:08</div>
<div class="t" style="left:283.95px;top:334px;font-size:5.2px;color:#666;letter-spacing:-0.203px;">00:09</div>
<div class="t" style="left:305.20px;top:334px;font-size:5.2px;color:#666;letter-spacing:-0.203px;">00:10</div>
<div class="t" style="left:326.45px;top:334px;font-size:5.2px;color:#666;letter-spacing:-0.125px;">00:11</div>
<div class="t" style="left:347.70px;top:334px;font-size:5.2px;color:#666;letter-spacing:-0.203px;">00:12</div>
<div class="t" style="left:368.95px;top:334px;font-size:5.2px;color:#666;letter-spacing:-0.203px;">00:13</div>
<div class="t" style="left:390.20px;top:334px;font-size:5.2px;color:#666;letter-spacing:-0.203px;">00:14</div>
<div class="t" style="left:411.45px;top:334px;font-size:5.2px;color:#666;letter-spacing:-0.203px;">00:15</div>
<div class="t" style="left:432.70px;top:334px;font-size:5.2px;color:#666;letter-spacing:-0.203px;">00:16</div>
<div class="t" style="left:453.95px;top:334px;font-size:5.2px;color:#666;letter-spacing:-0.203px;">00:17</div>
<div class="t" style="left:475.20px;top:334px;font-size:5.2px;color:#666;letter-spacing:-0.203px;">00:18</div>
<div class="t" style="left:496.45px;top:334px;font-size:5.2px;color:#666;letter-spacing:-0.203px;">00:19</div>
<div class="t" style="left:517.70px;top:334px;font-size:5.2px;color:#666;letter-spacing:-0.203px;">00:20</div>
<div class="t" style="left:538.95px;top:334px;font-size:5.2px;color:#666;letter-spacing:-0.203px;">00:21</div>
<div class="t" style="left:560.20px;top:334px;font-size:5.2px;color:#666;letter-spacing:-0.203px;">00:22</div>
<div class="t" style="left:581.45px;top:334px;font-size:5.2px;color:#666;letter-spacing:-0.203px;">00:23</div>
<div class="t" style="left:602.70px;top:334px;font-size:5.2px;color:#666;letter-spacing:-0.203px;">00:24</div>
<div class="t" style="left:623.95px;top:334px;font-size:5.2px;color:#666;letter-spacing:-0.203px;">00:25</div>
<div class="t" style="left:645.20px;top:334px;font-size:5.2px;color:#666;letter-spacing:-0.203px;">00:26</div>
<div class="t" style="left:666.45px;top:334px;font-size:5.2px;color:#666;letter-spacing:-0.203px;">00:27</div>
<div class="t" style="left:687.70px;top:334px;font-size:5.2px;color:#666;letter-spacing:-0.203px;">00:28</div>
<div class="t" style="left:708.95px;top:334px;font-size:5.2px;color:#666;letter-spacing:-0.203px;">00:29</div>
<div class="t" style="left:730.20px;top:334px;font-size:5.2px;color:#666;letter-spacing:-0.203px;">00:30</div>
<div class="t" style="left:751.45px;top:334px;font-size:5.2px;color:#666;letter-spacing:-0.203px;">00:31</div>
<div class="t" style="left:772.70px;top:334px;font-size:5.2px;color:#666;letter-spacing:-0.203px;">00:32</div>
<div class="t" style="left:793.95px;top:334px;font-size:5.2px;color:#666;letter-spacing:-0.203px;">00:33</div>
<div class="t" style="left:815.20px;top:334px;font-size:5.2px;color:#666;letter-spacing:-0.203px;">00:34</div>
<div class="a" style="left:836px;top:331px;width:9.2px;height:258px;background:#dde1e5;"></div>
<div class="a" style="left:836px;top:331.4px;width:9.2px;height:9px;background:#e4e7ea;border-bottom:1px solid #d4d8dc;"></div>
<div class="a" style="left:0px;top:589px;width:98.5px;height:9px;background:#eef2f6;"></div>
<div class="a" style="left:98.5px;top:589px;width:737.5px;height:9px;background:#dde1e5;"></div>
<div class="a" style="left:98.5px;top:589px;width:9px;height:9px;background:#e2e6ea;"></div>
<div class="a" style="left:836px;top:589px;width:9.2px;height:9px;background:#fff;"></div>
<svg class="a" style="left:838.5px;top:334.6px" width="5" height="4"><path d="M0.4 2.8 L2.2 0.6 L4 2.8 Z" fill="#9a9ea2"/></svg>
<svg class="a" style="left:838.20px;top:582.49px" width="4.80" height="3.82"><path d="M1 1 H3.80 L2.40 2.82 Z" fill="#999"/></svg>
<svg class="a" style="left:829.15px;top:590.90px" width="3.69" height="4.60"><path d="M1 1 V3.60 L2.69 2.30 Z" fill="#aaa"/></svg>
<div class="a" style="left:98.2px;top:331px;width:0.8px;height:12px;background:#dbe6f0;"></div>
<div class="a" style="left:98.2px;top:343px;width:0.8px;height:246px;background:#a9cff0;"></div>
<div class="a" style="left:204px;top:343px;width:0.8px;height:246px;background:#b4bfca;"></div>
<svg class="a" style="left:94.6px;top:338.6px" width="8" height="5" viewBox="0 0 8 5"><path d="M0.4 0.2 H7.6 L4 4.6 Z" fill="#1b80d6"/></svg>
<div class="a" style="left:98.6px;top:344px;width:105.6px;height:11.4px;background:#1b80d6;"></div>
<svg class="a" style="left:102px;top:346.2px" width="7" height="7" viewBox="0 0 7 7"><rect x="0.3" y="0.3" width="6.2" height="6.2" fill="#e8eef6" stroke="#9db6d2" stroke-width="0.5"/><rect x="1.2" y="1.4" width="4.4" height="2.2" fill="#7eaee0"/><path d="M1.2 5.4 L2.8 3.6 L3.8 4.6 L4.6 4 L5.6 5.4 Z" fill="#5a7a9a"/></svg>
<div class="t" style="left:113.40px;top:348px;font-size:5.6px;color:#fff;letter-spacing:-0.270px;">AdobeStock_51212131_Preview.jpg</div>
<svg class="a" style="left:198.90px;top:347.10px" width="4.21" height="5.40"><path d="M1 1 V4.40 L3.21 2.70 Z" fill="#fff"/></svg>
<div class="t" style="left:208.00px;top:345px;font-size:5.0px;color:#c4c8cc;letter-spacing:-0.499px;">End</div>
<svg class="a" style="left:2.20px;top:590.40px" width="4.60" height="6.00"><path d="M1 1 V5.00 L3.60 3.00 Z" fill="#555"/></svg>
<div class="a" style="left:12px;top:591.4px;width:4px;height:4px;background:#555;"></div>
<div class="a" style="left:22.4px;top:590.6px;width:0.6px;height:5.6px;background:#c4c8cc;"></div>
<svg class="a" style="left:29.6px;top:591.4px" width="7" height="4" viewBox="0 0 7 4"><path d="M0.4 3.6 L2.8 0.8 L5.2 3.6 Z" fill="#777"/></svg>
<svg class="a" style="left:40px;top:591px" width="14" height="5" viewBox="0 0 14 5"><circle cx="2" cy="2.4" r="1.4" fill="#fff" stroke="#666" stroke-width="0.7"/><path d="M3.4 2.4 H12.6" stroke="#777" stroke-width="0.8"/></svg>
<svg class="a" style="left:56.6px;top:590px" width="13" height="6" viewBox="0 0 13 6"><path d="M0.4 5 L2.8 2.2 L5.2 5 Z" fill="#777"/><path d="M3.6 5 L7.4 0.8 L11.2 5 Z" fill="#777"/></svg>
<div class="t" style="left:75.90px;top:592px;font-size:5.6px;color:#555;letter-spacing:-0.362px;">00:05.00</div>
<svg class="a" style="left:101.4px;top:591.2px" width="4" height="5"><path d="M2.8 0.6 V4 L0.8 2.3 Z" fill="#aaa"/></svg>
<div class="a" style="left:414px;top:184px;width:95px;height:202px;background:#fff;border:1px solid #d9dde1;box-shadow:0.5px 1px 2px rgba(0,0,0,0.14);"></div>
<div class="a" style="left:415.5px;top:185px;width:92.5px;height:9.5px;background:#d5e7f8;"></div>
<div class="a" style="left:426px;top:205.3px;width:82px;height:7.8px;background:#d3d3d3;"></div>
<div class="t" style="left:430.00px;top:187px;font-size:5.6px;color:#4a4a4a;letter-spacing:-0.405px;">Cu<u>t</u></div>
<div class="t" style="left:430.00px;top:197px;font-size:5.6px;color:#4a4a4a;letter-spacing:-0.518px;"><u>C</u>opy</div>
<div class="t" style="left:430.00px;top:207px;font-size:5.6px;color:#333;letter-spacing:-0.266px;">Paste Options:</div>
<div class="t" style="left:430.00px;top:231px;font-size:5.6px;color:#a9a9a9;letter-spacing:-0.369px;">Paste <u>S</u>pecial...</div>
<div class="a" style="left:415px;top:239px;width:93px;height:1px;background:#dcdfe2;"></div>
<div class="t" style="left:430.00px;top:243px;font-size:5.6px;color:#a9a9a9;letter-spacing:-0.213px;font-style:italic;"><u>G</u>roup</div>
<svg class="a" style="left:501.50px;top:242.60px" width="4.21" height="5.40"><path d="M1 1 V4.40 L3.21 2.70 Z" fill="#666"/></svg>
<div class="t" style="left:430.00px;top:253px;font-size:5.6px;color:#4a4a4a;letter-spacing:-0.173px;">Bring to F<u>r</u>ont</div>
<svg class="a" style="left:501.50px;top:252.50px" width="4.21" height="5.40"><path d="M1 1 V4.40 L3.21 2.70 Z" fill="#222"/></svg>
<div class="t" style="left:430.00px;top:263px;font-size:5.6px;color:#4a4a4a;letter-spacing:-0.359px;">Send to Bac<u>k</u></div>
<svg class="a" style="left:501.50px;top:262.30px" width="4.21" height="5.40"><path d="M1 1 V4.40 L3.21 2.70 Z" fill="#222"/></svg>
<div class="a" style="left:429px;top:270px;width:79px;height:1px;background:#dcdfe2;"></div>
<div class="t" style="left:430.00px;top:274px;font-size:5.6px;color:#4a4a4a;letter-spacing:-0.265px;">Button <u>S</u>et</div>
<svg class="a" style="left:501.50px;top:273.30px" width="4.21" height="5.40"><path d="M1 1 V4.40 L3.21 2.70 Z" fill="#222"/></svg>
<div class="t" style="left:430.00px;top:284px;font-size:5.6px;color:#4a4a4a;letter-spacing:-0.210px;">Drag and Drop</div>
<svg class="a" style="left:501.50px;top:283.20px" width="4.21" height="5.40"><path d="M1 1 V4.40 L3.21 2.70 Z" fill="#222"/></svg>
<div class="a" style="left:429px;top:291.2px;width:79px;height:1px;background:#dcdfe2;"></div>
<div class="t" style="left:430.00px;top:295px;font-size:5.6px;color:#4a4a4a;letter-spacing:-0.137px;">Add new horizontal guide line</div>
<div class="t" style="left:430.00px;top:305px;font-size:5.6px;color:#4a4a4a;letter-spacing:-0.190px;">Add new vertical guide line</div>
<div class="a" style="left:429px;top:312.2px;width:79px;height:1px;background:#dcdfe2;"></div>
<div class="t" style="left:430.00px;top:316px;font-size:5.6px;color:#4a4a4a;letter-spacing:-0.362px;">Replace Picture</div>
<svg class="a" style="left:501.50px;top:315.10px" width="4.21" height="5.40"><path d="M1 1 V4.40 L3.21 2.70 Z" fill="#222"/></svg>
<div class="t" style="left:430.00px;top:325px;font-size:5.6px;color:#4a4a4a;letter-spacing:-0.298px;">E<u>x</u>port Picture</div>
<svg class="a" style="left:501.50px;top:324.80px" width="4.21" height="5.40"><path d="M1 1 V4.40 L3.21 2.70 Z" fill="#222"/></svg>
<div class="t" style="left:430.00px;top:335px;font-size:5.6px;color:#4a4a4a;letter-spacing:-0.236px;">Show in Media Library...</div>
<div class="a" style="left:429px;top:342.4px;width:79px;height:1px;background:#dcdfe2;"></div>
<div class="t" style="left:430.00px;top:346px;font-size:5.6px;color:#4a4a4a;letter-spacing:-0.253px;">Rename 'Picture 1'</div>
<div class="a" style="left:429px;top:353.6px;width:79px;height:1px;background:#dcdfe2;"></div>
<div class="t" style="left:430.00px;top:357px;font-size:5.6px;color:#4a4a4a;letter-spacing:-0.277px;">Si<u>z</u>e and Position...</div>
<div class="t" style="left:430.00px;top:367px;font-size:5.6px;color:#4a4a4a;letter-spacing:-0.234px;"><u>A</u>ccessibility...</div>
<div class="a" style="left:429px;top:374.4px;width:79px;height:1px;background:#dcdfe2;"></div>
<div class="t" style="left:430.00px;top:378px;font-size:5.6px;color:#4a4a4a;letter-spacing:-0.317px;">F<u>o</u>rmat Picture...</div>
<svg class="a" style="left:416px;top:185.5px" width="9" height="9" viewBox="0 0 9 9"><path d="M2.2 0.8 L6 6 M6.6 0.8 L2.8 6" stroke="#555" stroke-width="0.9" fill="none"/><circle cx="2.3" cy="7" r="1.3" fill="none" stroke="#3a78c8" stroke-width="0.8"/><circle cx="6.5" cy="7" r="1.3" fill="none" stroke="#3a78c8" stroke-width="0.8"/></svg>
<svg class="a" style="left:416px;top:195px" width="9" height="9" viewBox="0 0 9 9"><path d="M0.8 0.8 H4 L5.4 2.2 V6.4 H0.8 Z" fill="#fff" stroke="#777" stroke-width="0.7"/><path d="M3 2.6 H6.4 L7.8 4 V8.4 H3 Z" fill="#eef2fa" stroke="#777" stroke-width="0.7"/></svg>
<svg class="a" style="left:416px;top:204.5px" width="9" height="9" viewBox="0 0 9 9"><rect x="0.8" y="1.4" width="5" height="6.4" fill="#f2c050" stroke="#c4922a" stroke-width="0.6"/><rect x="2" y="0.6" width="2.6" height="1.4" fill="#777"/><path d="M3.4 3.2 H6.4 L7.8 4.6 V8.4 H3.4 Z" fill="#fff" stroke="#777" stroke-width="0.6"/></svg>
<svg class="a" style="left:427.5px;top:214.5px" width="9" height="11" viewBox="0 0 9 11"><rect x="0.8" y="1.6" width="7.2" height="8.4" rx="0.8" fill="#f4a83a"/><rect x="2" y="2.8" width="4.8" height="6.2" fill="#c9d8ee"/><rect x="2.8" y="0.6" width="3.2" height="1.8" rx="0.5" fill="#666"/></svg>
<svg class="a" style="left:416px;top:241px" width="9" height="9" viewBox="0 0 9 9"><rect x="0.8" y="0.8" width="7" height="7" fill="none" stroke="#d0d0d0" stroke-width="0.6" stroke-dasharray="1 0.8"/><rect x="2.2" y="2.2" width="2.4" height="2.4" fill="#e2e2e2"/><rect x="4.2" y="4.2" width="2.4" height="2.4" fill="#d8d8d8"/></svg>
<svg class="a" style="left:416px;top:250.5px" width="9" height="9" viewBox="0 0 9 9"><rect x="0.8" y="0.8" width="3.2" height="3.2" fill="#fff" stroke="#777" stroke-width="0.6"/><rect x="5" y="5" width="3.2" height="3.2" fill="#fff" stroke="#777" stroke-width="0.6"/><rect x="2.4" y="2.4" width="4.2" height="4.2" fill="#f0b83c" stroke="#c8932a" stroke-width="0.5"/></svg>
<svg class="a" style="left:416px;top:260.5px" width="9" height="9" viewBox="0 0 9 9"><rect x="2.4" y="2.4" width="4.2" height="4.2" fill="#f0b83c" stroke="#c8932a" stroke-width="0.5"/><rect x="0.8" y="0.8" width="3.2" height="3.2" fill="#fff" stroke="#777" stroke-width="0.6"/><rect x="5" y="5" width="3.2" height="3.2" fill="#fff" stroke="#777" stroke-width="0.6"/></svg>
<svg class="a" style="left:416px;top:313.5px" width="9" height="9" viewBox="0 0 9 9"><rect x="0.6" y="0.8" width="5.4" height="4.2" fill="#3f86d4" stroke="#2d68b0" stroke-width="0.5"/><rect x="2.4" y="3.6" width="5.6" height="4.4" fill="#d9e8f8" stroke="#4a7ab8" stroke-width="0.6"/><path d="M3 7.4 L4.6 5.6 L5.8 6.8 L6.6 6.2 L7.6 7.4 Z" fill="#4a8a5a"/></svg>
<svg class="a" style="left:416px;top:323px" width="9" height="9" viewBox="0 0 9 9"><path d="M0.8 0.8 H4.4 L5.8 2.2 V8 H0.8 Z" fill="#fff" stroke="#777" stroke-width="0.7"/><path d="M3.4 4.6 H5.8 V3.2 L8.2 5.4 L5.8 7.6 V6.2 H3.4 Z" fill="#4aa84a" stroke="#2e7d32" stroke-width="0.4"/></svg>
<svg class="a" style="left:416px;top:333px" width="9" height="9" viewBox="0 0 9 9"><rect x="0.8" y="1.2" width="7" height="6.4" fill="#fff" stroke="#7d8794" stroke-width="0.7"/><rect x="1.4" y="1.8" width="5.8" height="3" fill="#6aa6e0"/><path d="M1.4 7 L3.6 4.4 L5 5.8 L6 5 L7.2 7 Z" fill="#4c9a58"/></svg>
<svg class="a" style="left:416px;top:355px" width="9" height="9" viewBox="0 0 9 9"><rect x="4.4" y="0.8" width="3.4" height="7" fill="#fff" stroke="#777" stroke-width="0.7"/><path d="M1.8 1 V7.6 M0.6 2.4 L1.8 1 L3 2.4 M0.6 6.2 L1.8 7.6 L3 6.2" stroke="#2f5f9a" stroke-width="0.8" fill="none"/></svg>
<svg class="a" style="left:416px;top:364.8px" width="9" height="9" viewBox="0 0 9 9"><circle cx="4.2" cy="4.4" r="3.5" fill="#4f92dc" stroke="#8ab4e6" stroke-width="0.5"/><circle cx="4.2" cy="2.6" r="0.8" fill="#fff"/><path d="M2 3.8 H6.4 M4.2 3.8 V5.4 M4.2 5.4 L3 7 M4.2 5.4 L5.4 7" stroke="#fff" stroke-width="0.7" fill="none"/></svg>
<svg class="a" style="left:416px;top:375.5px" width="9" height="9" viewBox="0 0 9 9"><path d="M1 3 C1 1 4 0.6 4.6 2.2 C5 3.4 3 3.6 3.6 4.8" stroke="#4a7ab8" stroke-width="0.8" fill="none"/><path d="M2 5 L6 5.6 L7.6 7.6 L3 7.4 Z" fill="#f0b83c" stroke="#8a6a2a" stroke-width="0.4"/><path d="M5 3.4 L7.8 6.2" stroke="#555" stroke-width="0.9"/></svg>
</body></html>
